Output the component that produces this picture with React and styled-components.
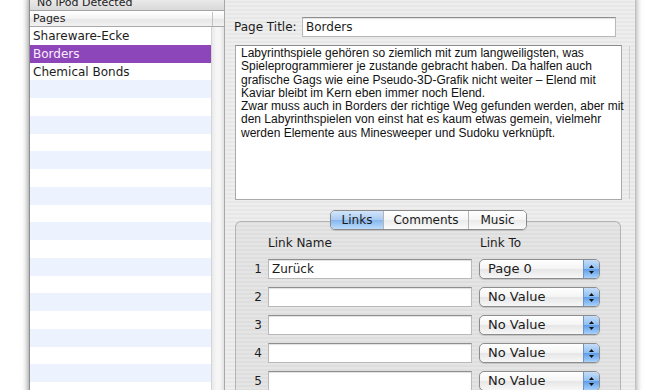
import { Fragment } from 'react';
import styled, { createGlobalStyle } from 'styled-components';

const Global = createGlobalStyle`
  html, body {
    margin: 0;
    padding: 0;
    background: #fff;
  }
  body {
    font-family: "DejaVu Sans", "Lucida Grande", sans-serif;
    color: #1c1c1c;
  }
`;

const pinstripe = `repeating-linear-gradient(to bottom, #eeeeee 0px, #eeeeee 2px, #e7e7e7 2px, #e7e7e7 4px)`;

const Desktop = styled.div`
  width: 660px;
  height: 390px;
  overflow: hidden;
  background: #fff;
  padding-left: 29px;
  box-sizing: border-box;
`;

const Window = styled.div`
  width: 606px;
  height: 410px;
  margin-top: -5px;
  display: flex;
  background: ${pinstripe};
  box-shadow: 0 0 7px rgba(0, 0, 0, 0.55);
`;

const Sidebar = styled.div`
  width: 196px;
  display: flex;
  flex-direction: column;
  border-left: 1px solid #8f8f8f;
  border-right: 1px solid #a8a8a8;
  box-sizing: border-box;
`;

const SourceHeader = styled.div`
  height: 16px;
  line-height: 15px;
  font-size: 11px;
  padding-left: 7px;
  background: linear-gradient(#f2f2f2, #d9d9d9);
  border-bottom: 1px solid #a5a5a5;
  box-sizing: border-box;
  color: #222;
`;

const TableHeader = styled.div`
  display: flex;
  height: 16px;
  border-top: 1px solid #fff;
  border-bottom: 1px solid #a9a9a9;
  box-sizing: border-box;
  background: linear-gradient(#ffffff, #f1f1f1 50%, #e6e6e6 51%, #f2f2f2);
`;

const HeaderCell = styled.div`
  flex: 1;
  font-size: 11px;
  line-height: 14px;
  padding-left: 3px;
  border-right: 1px solid #c2c2c2;
  color: #222;
`;

const CornerCell = styled.div`
  width: 11px;
`;

const TableBody = styled.div`
  flex: 1;
  display: flex;
  overflow: hidden;
`;

const Rows = styled.div`
  flex: 1;
  background: #fff;
`;

const Row = styled.div`
  height: 17.75px;
  line-height: 19px;
  font-size: 12px;
  padding-left: 3px;
  white-space: nowrap;
  overflow: hidden;
  color: ${(p) => (p.$selected ? '#fbeeff' : '#1c1c1c')};
  background: ${(p) => (p.$selected ? '#8d46b9' : p.$odd ? '#edf3fe' : '#ffffff')};
`;

const SideScroll = styled.div`
  width: 12px;
  border-left: 1px solid #d4d4d4;
  background: linear-gradient(to right, #e9e9e9, #f7f7f7 40%, #f4f4f4 70%, #e2e2e2);
`;

const Main = styled.div`
  flex: 1;
  display: flex;
  flex-direction: column;
  padding: 22px 13px 0 10px;
  min-width: 0;
`;

const TitleRow = styled.div`
  display: flex;
  align-items: center;
  height: 20px;
`;

const Label = styled.span`
  font-size: 12px;
  margin-left: -1px;
  color: #1c1c1c;
`;

const TextField = styled.div`
  box-sizing: border-box;
  width: ${(p) => p.$width || 'auto'};
  height: 20px;
  margin-left: ${(p) => (p.$push ? 'auto' : '0')};
  margin-right: ${(p) => p.$mr || '0'};
  background: #fff;
  border: 1px solid #b9b9b9;
  border-top-color: #8e8e8e;
  box-shadow: inset 0 1px 1px rgba(0, 0, 0, 0.12);
  font-size: 12px;
  line-height: 18px;
  padding-left: 3px;
  white-space: nowrap;
`;

const TextArea = styled.div`
  margin-top: 8px;
  height: 155px;
  display: flex;
  background: #fff;
  border: 1px solid #a9a9a9;
  border-top-color: #8d8d8d;
  box-sizing: border-box;
`;

const Body = styled.div`
  flex: 1;
  padding: 1px 5px;
  font-family: "Liberation Sans", Arial, sans-serif;
  font-size: 12px;
  line-height: 13.25px;
  color: #111;
`;

const Line = styled.div`
  white-space: nowrap;
`;

const AreaScroll = styled.div`
  width: 14px;
  border-left: 1px solid #cfcfcf;
  background: linear-gradient(to right, #e6e6e6, #f8f8f8 40%, #f5f5f5 70%, #e0e0e0);
`;

const TabSection = styled.div`
  margin-top: 10px;
  display: flex;
  flex-direction: column;
  flex: 1;
`;

const Tabs = styled.div`
  position: relative;
  z-index: 1;
  align-self: center;
  display: flex;
  height: 20px;
  box-sizing: border-box;
  border: 1px solid #8a8a8a;
  border-radius: 5px;
  overflow: hidden;
  box-shadow: 0 1px 1px rgba(0, 0, 0, 0.15);
`;

const Tab = styled.div`
  width: ${(p) => p.$w}px;
  text-align: center;
  font-size: 12px;
  line-height: 18px;
  color: #1a1a1a;
  border-left: ${(p) => (p.$first ? 'none' : '1px solid #b5b5b5')};
  background: ${(p) =>
    p.$active
      ? 'linear-gradient(#d3e5fa, #a9cbf2 50%, #86b6ee 51%, #bcdcfb)'
      : 'linear-gradient(#ffffff, #f5f5f5 50%, #eaeaea 51%, #fbfbfb)'};
`;

const GroupBox = styled.div`
  flex: 1;
  margin-top: -9px;
  margin-right: 1px;
  border: 1px solid #b3b3b3;
  border-bottom: none;
  border-radius: 6px 6px 0 0;
  background: rgba(0, 0, 0, 0.035);
  padding: 14px 0 0 14px;
`;

const LinkGrid = styled.div`
  display: grid;
  grid-template-columns: 18px 211px 121px;
  grid-template-rows: 15px;
  grid-auto-rows: 20px;
  row-gap: 8px;
  align-items: center;
`;

const ColHead = styled.div`
  font-size: 12px;
  line-height: 15px;
  padding-left: ${(p) => p.$pl || 0}px;
`;

const Num = styled.div`
  font-size: 12px;
  text-align: right;
  padding-right: 6px;
`;

const Popup = styled.div`
  position: relative;
  height: 20px;
  box-sizing: border-box;
  border: 1px solid #8c8c8c;
  border-radius: 5px;
  background: linear-gradient(#ffffff, #f4f4f4 50%, #e6e6e6 51%, #f7f7f7);
  box-shadow: 0 1px 1px rgba(0, 0, 0, 0.15);
  font-size: 13px;
  line-height: 18px;
  padding-left: 8px;
  overflow: hidden;
`;

const Arrows = styled.div`
  position: absolute;
  top: 0;
  right: 0;
  bottom: 0;
  width: 15px;
  display: flex;
  align-items: center;
  justify-content: center;
  background: linear-gradient(#c6ddf8, #8fbdf0 50%, #5d9de8 51%, #a9d1fb);
  border-left: 1px solid #6f93c4;
`;

const PopupArrows = () => (
  <Arrows>
    <svg width="7" height="11" viewBox="0 0 7 11">
      <path d="M3.5 1 L6 4 L1 4 Z" fill="#111" />
      <path d="M3.5 10 L6 7 L1 7 Z" fill="#111" />
    </svg>
  </Arrows>
);

const pages = ['Shareware-Ecke', 'Borders', 'Chemical Bonds'];

const lines = [
  'Labyrinthspiele gehören so ziemlich mit zum langweiligsten, was',
  'Spieleprogrammierer je zustande gebracht haben. Da halfen auch',
  'grafische Gags wie eine Pseudo-3D-Grafik nicht weiter – Elend mit',
  'Kaviar bleibt im Kern eben immer noch Elend.',
  'Zwar muss auch in Borders der richtige Weg gefunden werden, aber mit',
  'den Labyrinthspielen von einst hat es kaum etwas gemein, vielmehr',
  'werden Elemente aus Minesweeper und Sudoku verknüpft.',
];

const links = [
  { name: 'Zurück', to: 'Page 0' },
  { name: '', to: 'No Value' },
  { name: '', to: 'No Value' },
  { name: '', to: 'No Value' },
  { name: '', to: 'No Value' },
];

export default function App() {
  const rows = Array.from({ length: 22 }, (_, i) => pages[i] || '');
  return (
    <>
      <Global />
      <Desktop>
        <Window>
          <Sidebar>
            <SourceHeader>No iPod Detected</SourceHeader>
            <TableHeader>
              <HeaderCell>Pages</HeaderCell>
              <CornerCell />
            </TableHeader>
            <TableBody>
              <Rows>
                {rows.map((r, i) => (
                  <Row key={i} $selected={i === 1} $odd={i % 2 === 1}>
                    {r}
                  </Row>
                ))}
              </Rows>
              <SideScroll />
            </TableBody>
          </Sidebar>
          <Main>
            <TitleRow>
              <Label>Page Title:</Label>
              <TextField $width="314px" $push $mr="6px">Borders</TextField>
            </TitleRow>
            <TextArea>
              <Body>
                {lines.map((l, i) => (
                  <Line key={i}>{l}</Line>
                ))}
              </Body>
              <AreaScroll />
            </TextArea>
            <TabSection>
              <Tabs>
                <Tab $w={52} $first $active>Links</Tab>
                <Tab $w={84}>Comments</Tab>
                <Tab $w={57}>Music</Tab>
              </Tabs>
              <GroupBox>
                <LinkGrid>
                  <span />
                  <ColHead>Link Name</ColHead>
                  <ColHead $pl={1}>Link To</ColHead>
                  {links.map((l, i) => (
                    <Fragment key={i}>
                      <Num>{i + 1}</Num>
                      <TextField $width="204px">{l.name}</TextField>
                      <Popup>
                        {l.to}
                        <PopupArrows />
                      </Popup>
                    </Fragment>
                  ))}
                </LinkGrid>
              </GroupBox>
            </TabSection>
          </Main>
        </Window>
      </Desktop>
    </>
  );
}
